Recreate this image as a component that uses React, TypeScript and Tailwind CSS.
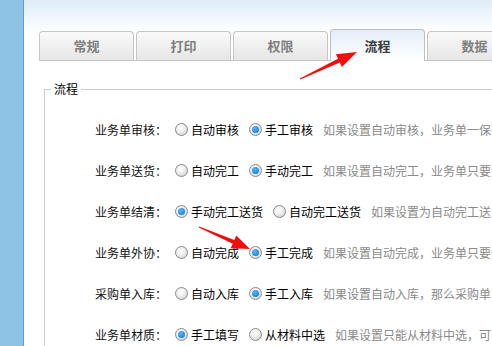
const tabs = ["常规", "打印", "权限", "流程", "数据"];

type Row = {
  label: string;
  options: [string, string];
  checked: 0 | 1;
  note: string;
};

const rows: Row[] = [
  { label: "业务单审核：", options: ["自动审核", "手工审核"], checked: 1, note: "如果设置自动审核，业务单一保存就会自动审核" },
  { label: "业务单送货：", options: ["自动完工", "手动完工"], checked: 1, note: "如果设置自动完工，业务单只要送货完成就自动完工" },
  { label: "业务单结清：", options: ["手动完工送货", "自动完工送货"], checked: 0, note: "如果设置为自动完工送货，业务单会自动结清" },
  { label: "业务单外协：", options: ["自动完成", "手工完成"], checked: 1, note: "如果设置自动完成，业务单只要外协完成就自动完成" },
  { label: "采购单入库：", options: ["自动入库", "手工入库"], checked: 1, note: "如果设置自动入库，那么采购单审核后自动入库" },
  { label: "业务单材质：", options: ["手工填写", "从材料中选"], checked: 0, note: "如果设置只能从材料中选，可以避免手工填写错误" }
];

function Radio({ on }: { on: boolean }) {
  return (
    <span className="relative inline-flex h-[13px] w-[13px] shrink-0 items-center justify-center rounded-full border border-[#8a8a8a] bg-[radial-gradient(circle_at_40%_35%,#ffffff_0%,#f0f0f0_40%,#c9c9c9_100%)]">
      {on && (
        <span className="h-[7px] w-[7px] rounded-full bg-[radial-gradient(circle_at_40%_35%,#5ab8f5_0%,#1a88dc_70%,#1370c0_100%)]" />
      )}
    </span>
  );
}

function Option({ text, on }: { text: string; on: boolean }) {
  return (
    <span className="flex items-center">
      <Radio on={on} />
      <span className="ml-[3px] text-black">{text}</span>
    </span>
  );
}

export default function App() {
  return (
    <div
      className="relative flex h-[346px] w-[492px] overflow-hidden bg-white text-[12px] leading-[16px]"
      style={{ fontFamily: '"Noto Sans CJK SC", "Noto Sans", sans-serif' }}
    >
      <div className="w-[24px] shrink-0 border-r border-[#5d9fd3] bg-[#8ec3e6]" />

      <div className="flex min-w-0 flex-1 flex-col bg-[linear-gradient(180deg,#deecf9_0px,#ffffff_32px)]">
        <div className="ml-[15px] mt-[29px] flex items-end gap-[2px] border-b border-[#c6c6c6]">
          {tabs.map((t) =>
            t === "流程" ? (
              <div
                key={t}
                className="-mb-px flex h-[32px] w-[95px] shrink-0 items-center justify-center rounded-t-[4px] border border-b-0 border-[#bdbdbd] bg-[linear-gradient(180deg,#e4eef9_0%,#ffffff_100%)] text-[13px] font-bold text-[#3c3c3c]"
              >
                {t}
              </div>
            ) : (
              <div
                key={t}
                className="flex h-[29px] w-[95px] shrink-0 items-center justify-center rounded-t-[4px] border border-b-0 border-[#c6c6c6] bg-[linear-gradient(180deg,#fafafa_0%,#e6e6e6_100%)] text-[13px] font-bold text-[#7f7f7f]"
              >
                {t}
              </div>
            )
          )}
        </div>

        <fieldset className="ml-[20px] mt-[20px] border border-r-0 border-b-0 border-[#cccccc] pb-4">
          <legend className="ml-[6px] px-[3px] text-[12px] text-black">流程</legend>
          <div className="mt-[12px] flex flex-col">
            {rows.map((r) => (
              <div key={r.label} className="flex h-[41px] items-center whitespace-nowrap">
                <span className="w-[122px] shrink-0 text-right text-[#111]">{r.label}</span>
                <span className="ml-[8px] flex items-center gap-[10px]">
                  <Option text={r.options[0]} on={r.checked === 0} />
                  <Option text={r.options[1]} on={r.checked === 1} />
                  <span className="text-[#8a8a8a]">{r.note}</span>
                </span>
              </div>
            ))}
          </div>
        </fieldset>
      </div>

      <svg className="pointer-events-none absolute left-0 top-0" width="492" height="346" viewBox="0 0 492 346">
        <polygon
          fill="#f20d0d"
          points="299.8,78.6 338,58.8 335.9,54.3 357,52 341.9,66.9 339.8,62.4 300.2,79.4"
        />
        <polygon
          fill="#f20d0d"
          points="199.2,226.5 234.3,240.1 236.3,235.5 250,249 230.7,248.3 232.7,243.7 198.8,227.5"
        />
      </svg>
    </div>
  );
}
